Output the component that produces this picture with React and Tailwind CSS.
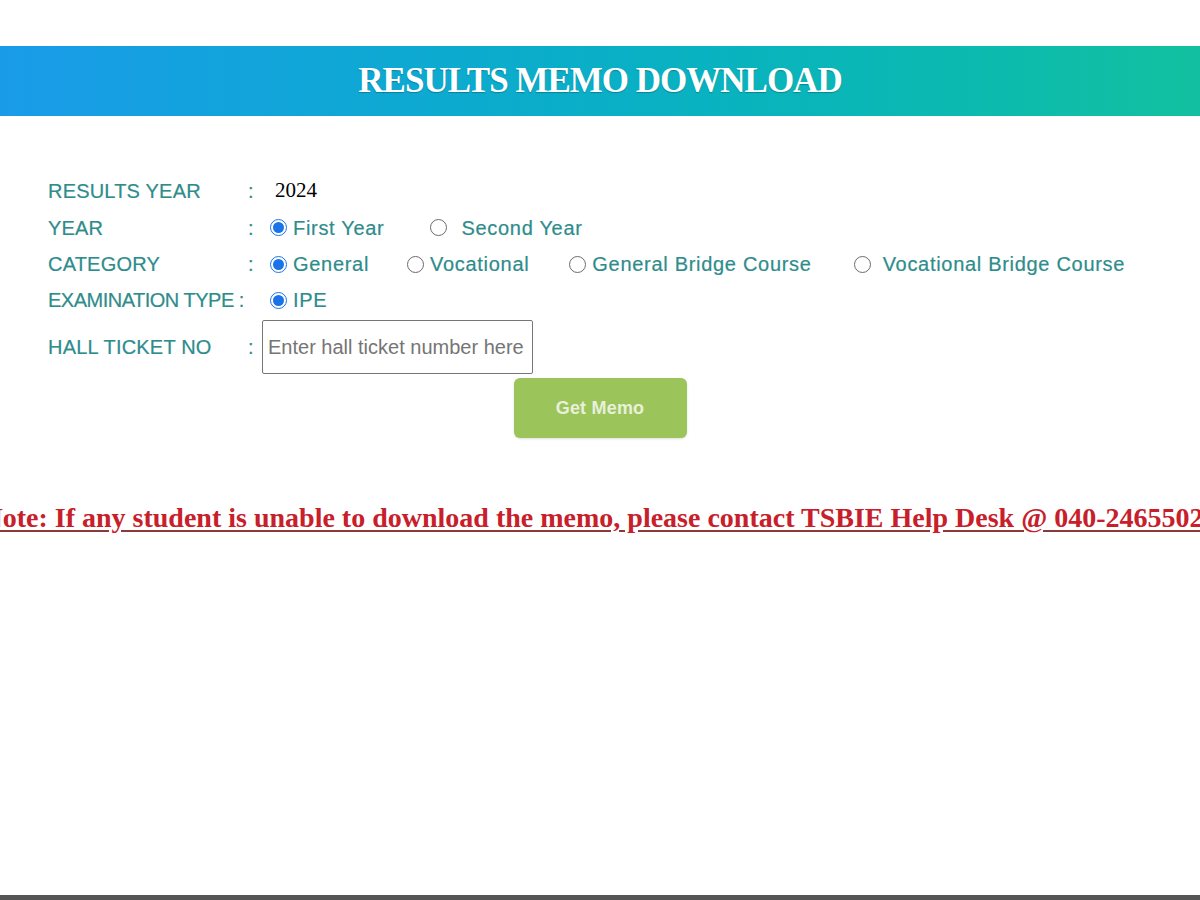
import React from "react";

const sans = { fontFamily: '"Liberation Sans", Arial, sans-serif' };
const serif = { fontFamily: '"Liberation Serif", "Times New Roman", serif' };

function Radio({ checked, label, className = "" }) {
  return (
    <label className={`flex items-center ${className}`}>
      <span
        className={`w-[17px] h-[17px] rounded-full border flex items-center justify-center bg-white ${
          checked ? "border-[#1a73e8]" : "border-[#6b6b6b]"
        }`}
      >
        {checked && <span className="w-[11px] h-[11px] rounded-full bg-[#1a73e8]"></span>}
      </span>
      <span className="ml-[6px] tracking-[0.7px]">{label}</span>
    </label>
  );
}

function Row({ label, children, className = "", hideColon, labelClass = "tracking-[0.2px]" }) {
  return (
    <div className={`flex items-center ${className}`}>
      <div className={`w-[200px] whitespace-nowrap ${labelClass}`}>{label}</div>
      <div className={`w-[22px] ${hideColon ? "invisible" : ""}`}>:</div>
      <div className="flex items-center">{children}</div>
    </div>
  );
}

export default function App() {
  return (
    <div className="w-[1200px] h-[900px] bg-white relative overflow-hidden flex flex-col">
      {/* header */}
      <div className="mt-[46px] h-[70px] bg-gradient-to-r from-[#1a9be9] to-[#12c0a0] flex items-center justify-center">
        <h1
          className="text-white font-bold text-[35px] tracking-[-1px] [text-shadow:0_1px_1px_rgba(0,0,0,0.25)]"
          style={serif}
        >
          RESULTS MEMO DOWNLOAD
        </h1>
      </div>

      {/* form */}
      <div className="pl-[48px] pt-[56px] text-[20px] text-[#2e8c8c] [-webkit-text-stroke:0.2px_#2e8c8c]" style={sans}>
        <Row label="RESULTS YEAR" className="h-[37px]">
          <span className="ml-[5px] text-black text-[21px] [-webkit-text-stroke:0]" style={serif}>2024</span>
        </Row>
        <Row label="YEAR" className="h-[37px]">
          <Radio checked label="First Year" />
          <Radio label="Second Year" className="ml-[46px] gap-[8px]" />
        </Row>
        <Row label="CATEGORY" className="h-[36px]">
          <Radio checked label="General" />
          <Radio label="Vocational" className="ml-[38px]" />
          <Radio label="General Bridge Course" className="ml-[40px]" />
          <Radio label="Vocational Bridge Course" className="ml-[42px] gap-[6px]" />
        </Row>
        <Row label="EXAMINATION TYPE :" className="h-[36px]" hideColon labelClass="tracking-[-0.5px]">
          <Radio checked label="IPE" />
        </Row>
        <Row label="HALL TICKET NO" className="h-[54px] mt-[2px]">
          <input
            type="text"
            placeholder="Enter hall ticket number here"
            className="-ml-[8px] w-[271px] h-[54px] border border-[#767676] rounded-[2px] px-[5px] text-[20px] placeholder:text-[#757575] outline-none [-webkit-text-stroke:0]"
            style={sans}
          />
        </Row>
      </div>

      <div className="flex justify-center mt-[4px]">
        <button
          className="w-[173px] h-[60px] rounded-[6px] bg-[#9bc45b] text-[#e8f0da] text-[18px] font-bold tracking-[0.2px] shadow-sm"
          style={sans}
        >
          Get Memo
        </button>
      </div>

      {/* note */}
      <div className="mt-[63px] flex justify-center">
        <p
          className="whitespace-nowrap font-bold text-[28px] leading-[34px] text-[#c8202a] underline underline-offset-[3px] decoration-[#8a3a3a]"
          style={serif}
        >
          Note: If any student is unable to download the memo, please contact TSBIE Help Desk @ 040-24655027
        </p>
      </div>

      <div className="absolute left-0 bottom-0 w-full h-[5px] bg-[#555555]"></div>
    </div>
  );
}
